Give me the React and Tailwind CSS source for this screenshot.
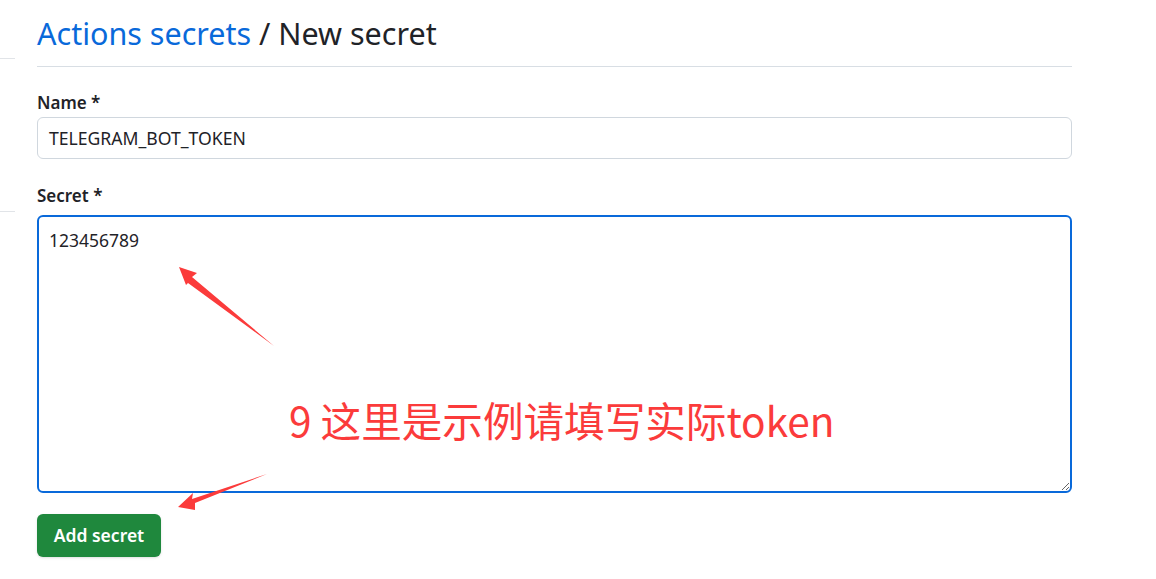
import React from 'react';

const Annotations = () => (
  <svg className="absolute left-0 top-0 pointer-events-none" width="1156" height="579" viewBox="0 0 1156 579">
    <polygon points="179,267 197,273 192,277 274,346 188,283 186,285" fill="#fb3b3b" />
    <polygon points="178,507 193,493 192,499 267,474 195,503 195,510" fill="#fb3b3b" />
  </svg>
);

const App = () => {
  return (
    <div className="relative w-[1156px] h-[579px] bg-white overflow-hidden" style={{ fontFamily: '"Noto Sans", "Open Sans", sans-serif' }}>
      <div className="flex">
        <div className="w-[15px] shrink-0">
          <div className="mt-[58px] h-px bg-[#e1e4e8]"></div>
          <div className="mt-[152px] h-px bg-[#e1e4e8]"></div>
        </div>
        <div className="ml-[22px] w-[1035px]">
          <div className="pt-[12px] pb-[12px] border-b border-[#d8dee4]">
            <h1 className="text-[30.5px] leading-[42px] font-normal text-[#1f2328]">
              <span className="text-[#0969da]">Actions secrets</span> / New secret
            </h1>
          </div>

          <div className="mt-[24px]">
            <label className="block text-[17px] leading-[24px] font-semibold text-[#1f2328]">Name *</label>
            <div className="mt-[2px] h-[42px] rounded-md border border-[#d0d7de] bg-white flex items-center px-[11px] text-[17.6px] text-[#1f2328]">
              TELEGRAM_BOT_TOKEN
            </div>
          </div>

          <div className="mt-[25px]">
            <label className="block text-[17px] leading-[24px] font-semibold text-[#1f2328]">Secret *</label>
            <textarea
              readOnly
              value="123456789"
              className="mt-[7px] block w-full h-[278px] rounded-md border-2 border-[#0969da] px-[10px] py-[11px] text-[17.5px] leading-[24px] text-[#1f2328] outline-none"
              style={{ fontFamily: '"Noto Sans", "Open Sans", sans-serif' }}
            />
          </div>

          <button className="mt-[21px] h-[43px] w-[124px] rounded-md bg-[#1f883d] text-white text-[17.5px] font-semibold shadow-sm">
            Add secret
          </button>
        </div>
      </div>

      <Annotations />
      <div
        className="absolute left-[289px] top-[394px] text-[40.6px] leading-[52px] text-[#fb3b3b] whitespace-nowrap"
        style={{ fontFamily: '"Noto Sans CJK SC", "Noto Sans", sans-serif' }}
      >
        9 这里是示例请填写实际token
      </div>
    </div>
  );
};

export default App;
